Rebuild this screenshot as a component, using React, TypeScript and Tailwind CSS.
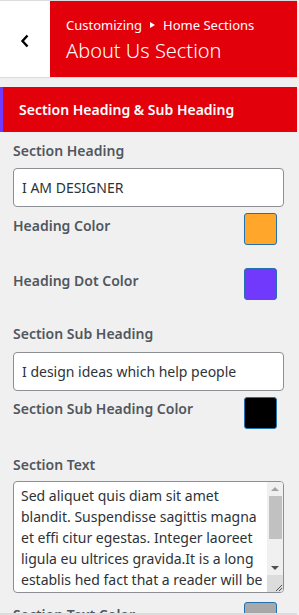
const lines = [
  "Sed aliquet quis diam sit amet",
  "blandit. Suspendisse sagittis magna",
  "et effi citur egestas. Integer laoreet",
  "ligula eu ultrices gravida.It is a long",
  "establis hed fact that a reader will be",
]

function Swatch({ color }: { color: string }) {
  return <div className="w-[33px] h-[32px] rounded-[3px] border border-[#2271b1]" style={{ background: color }} />
}

function ColorRow({ label, color, className }: { label: string; color: string; className?: string }) {
  return (
    <div className={"flex items-start justify-between pr-[7px] " + (className ?? "")}>
      <span className="text-[14px] font-semibold leading-[24px] text-[#50575e] mt-[1px]">{label}</span>
      <Swatch color={color} />
    </div>
  )
}

export default function App() {
  return (
    <div
      className="w-[299px] h-[615px] overflow-hidden bg-[#f0f0f1]"
      style={{ fontFamily: '"Noto Sans", "Open Sans", sans-serif' }}
    >
      <div className="w-[297px] relative h-[615px]">
        {/* top bar */}
        <div className="flex h-[78px] border-t border-b border-[#dcdcde]">
          <button className="w-[50px] bg-white flex items-center justify-center">
            <svg width="10" height="14" viewBox="0 0 10 14" className="mt-[4px] mr-[1px]">
              <polyline points="7.5,1.5 2.5,7 7.5,12.5" fill="none" stroke="#000" strokeWidth="2.4" />
            </svg>
          </button>
          <div className="flex-1 bg-[#e2000b] pl-4 pt-[14px] text-white">
            <div className="flex items-center text-[13px] leading-[20px]">
              <span>Customizing</span>
              <span className="mx-[8px] w-0 h-0 border-t-[3px] border-b-[3px] border-l-[5px] border-t-transparent border-b-transparent border-l-white" />
              <span>Home Sections</span>
            </div>
            <div className="text-[20px] font-light leading-[28px] mt-[2px]">About Us Section</div>
          </div>
        </div>

        {/* section header */}
        <div className="mt-[9px] h-[45px] bg-[#e2000b] border-l-[3px] border-[#7139fb] flex items-center pl-4">
          <span className="text-white font-semibold text-[14px]">Section Heading &amp; Sub Heading</span>
        </div>

        <div className="px-[13px]">
          <div className="mt-[7px] text-[14px] font-semibold leading-[24px] text-[#50575e]">Section Heading</div>
          <div className="mt-[5px] h-[39px] bg-white border border-[#8c8f94] rounded-[4px] flex items-center px-[8px] text-[14px] text-[#2c3338]">
            I AM DESIGNER
          </div>

          <ColorRow label="Heading Color" color="#ffa62b" className="mt-[6px]" />
          <ColorRow label="Heading Dot Color" color="#7139fb" className="mt-[23px]" />

          <div className="mt-[22px] text-[14px] font-semibold leading-[24px] text-[#50575e]">Section Sub Heading</div>
          <div className="mt-[6px] h-[39px] bg-white border border-[#8c8f94] rounded-[4px] flex items-center px-[8px] text-[14px] text-[#2c3338]">
            I design ideas which help people
          </div>
          <div className="flex items-start justify-between pr-[7px] mt-[6px]">
            <span className="text-[14px] font-semibold leading-[24px] text-[#50575e]">Section Sub Heading Color</span>
            <Swatch color="#000000" />
          </div>

          <div className="mt-[24px] text-[14px] font-semibold leading-[24px] text-[#50575e]">Section Text</div>
          <div className="mt-[4px] h-[112px] bg-white border border-[#8c8f94] rounded-[4px] flex overflow-hidden">
            <div className="flex-1 pl-[7px] pt-[3px] text-[14px] leading-[21px] text-[#2c3338] whitespace-nowrap overflow-hidden">
              {lines.map((l, i) => (
                <div key={i}>{l}</div>
              ))}
            </div>
            <div className="w-[16px] bg-[#f0f0f0] flex flex-col items-center">
              <div className="h-[14px] flex items-center justify-center">
                <div className="w-0 h-0 border-l-[4px] border-r-[4px] border-b-[4px] border-l-transparent border-r-transparent border-b-[#a3a3a3]" />
              </div>
              <div className="w-[13px] h-[43px] bg-[#c1c1c1]" />
              <div className="flex-1" />
              <div className="h-[14px] flex items-center justify-center">
                <div className="w-0 h-0 border-l-[4px] border-r-[4px] border-t-[4px] border-l-transparent border-r-transparent border-t-[#505050]" />
              </div>
              <div className="w-[16px] h-[17px] bg-[#dcdcdc] flex items-end justify-end">
                <svg width="10" height="10" viewBox="0 0 10 10">
                  <line x1="3" y1="9" x2="9" y2="3" stroke="#555" strokeWidth="1" />
                  <line x1="6" y1="9" x2="9" y2="6" stroke="#555" strokeWidth="1" />
                </svg>
              </div>
            </div>
          </div>

          <ColorRow label="Section Text Color" color="#a8a8a8" className="mt-[9px]" />
        </div>
        <div className="absolute left-0 right-0 bottom-0 h-[2px] bg-[#dcdcde]" />
      </div>
    </div>
  )
}
